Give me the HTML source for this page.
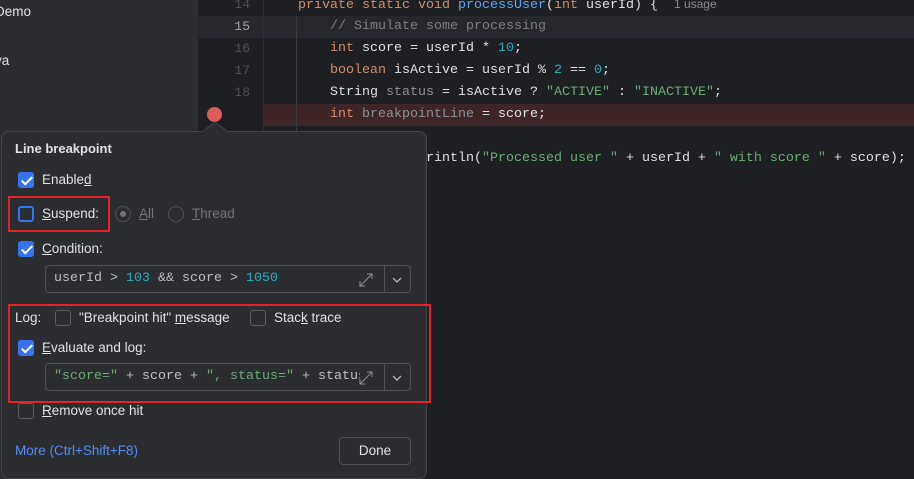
<!DOCTYPE html>
<html><head><style>
*{margin:0;padding:0;box-sizing:border-box}
body{width:914px;height:479px;overflow:hidden;background:#1e1f22;font-family:"Liberation Sans",sans-serif;font-size:13.5px;color:#dfe1e5;position:relative}
.a{position:absolute}
.mono{font-family:"Liberation Mono",monospace;font-size:13.33px;white-space:pre}
.ln{position:absolute;left:198px;width:52px;text-align:right;color:#4b5059;font-family:"Liberation Mono",monospace;font-size:13px}
.code{position:absolute;left:298px}
.k{color:#cf8e6d}.f{color:#56a8f5}.n{color:#2aacb8}.s{color:#6aab73}.c{color:#7a7e85}.g{color:#8c8f94}
.cb{position:absolute;width:16px;height:16px;border-radius:3px;border:1px solid #5a5d63}
.cb.on{background:#3574f0;border-color:#3574f0}
.cb.on::after{content:"";position:absolute;left:5px;top:1px;width:4px;height:9px;border:solid #fff;border-width:0 2px 2px 0;transform:rotate(45deg)}
.lbl{position:absolute;white-space:nowrap}
.field{position:absolute;left:45px;width:366px;height:28px;border:1px solid #4e5157;border-radius:4px;background:#2b2d30}
.field .sep{position:absolute;left:338px;top:0;bottom:0;width:1px;background:#4e5157}
.red{position:absolute;border:2px solid #e5212a}
u{text-decoration:underline}
</style></head><body>
<div class="a" style="left:0;top:0;width:198px;height:479px;background:#2b2d30"></div>
<div class="lbl" style="left:-5px;top:4px">Demo</div>
<div class="lbl" style="left:-5px;top:53px">va</div>
<div class="a" style="left:198px;top:16px;width:716px;height:22px;background:#26282e"></div>
<div class="a" style="left:263px;top:104px;width:651px;height:22px;background:#3e2628"></div>
<div class="a" style="left:263px;top:0;width:1px;height:131px;background:#2b2d30"></div>
<div class="a" style="left:296px;top:16px;width:1px;height:115px;background:#393b40"></div>
<div class="ln" style="top:-3px">14</div>
<div class="ln" style="top:19px;color:#a1a3ab">15</div>
<div class="ln" style="top:41px">16</div>
<div class="ln" style="top:63px">17</div>
<div class="ln" style="top:85px">18</div>
<div class="a" style="left:207px;top:107px;width:15px;height:15px;border-radius:50%;background:#db5c5c"></div>
<div class="code mono" style="top:-3px"><span class="k">private static void </span><span class="f">processUser</span>(<span class="k">int </span>userId) {  <span style="font-family:'Liberation Sans';font-size:12px;color:#868a91">1 usage</span></div>
<div class="code mono" style="top:19px">    <span class="c">// Simulate some processing</span></div>
<div class="code mono" style="top:41px">    <span class="k">int </span>score = userId * <span class="n">10</span>;</div>
<div class="code mono" style="top:63px">    <span class="k">boolean </span>isActive = userId % <span class="n">2</span> == <span class="n">0</span>;</div>
<div class="code mono" style="top:85px">    String <span class="g">status</span> = isActive ? <span class="s">"ACTIVE"</span> : <span class="s">"INACTIVE"</span>;</div>
<div class="code mono" style="top:107px">    <span class="k">int </span><span class="g">breakpointLine</span> = score;</div>
<div class="code mono" style="top:151px">    System.out.println(<span class="s">"Processed user "</span> + userId + <span class="s">" with score "</span> + score);</div>

<div class="a" style="left:1px;top:131px;width:426px;height:348px;background:#2b2d30;border:1px solid #43454a;border-radius:8px"></div>
<svg class="a" style="left:202px;top:121px" width="26" height="12"><path d="M0 11 L13 1 L26 11" fill="#2b2d30" stroke="#43454a"/><rect x="1" y="10.5" width="24" height="2" fill="#2b2d30"/></svg>
<div class="lbl" style="left:15px;top:141px;font-weight:bold;font-size:13px">Line breakpoint</div>
<div class="cb on" style="left:18px;top:172px"></div>
<div class="lbl" style="left:42px;top:172px">Enable<u>d</u></div>
<div class="red" style="left:8px;top:196px;width:102px;height:36px"></div>
<div class="cb" style="left:18px;top:206px;border-color:#3574f0;border-width:2px"></div>
<div class="lbl" style="left:42px;top:206px"><u>S</u>uspend:</div>
<div class="a" style="left:115px;top:206px;width:16px;height:16px;border-radius:50%;border:1px solid #4e5157"><div class="a" style="left:4px;top:4px;width:6px;height:6px;border-radius:50%;background:#6f737a"></div></div>
<div class="lbl" style="left:139px;top:206px;color:#6f737a"><u>A</u>ll</div>
<div class="a" style="left:168px;top:206px;width:16px;height:16px;border-radius:50%;border:1px solid #4e5157"></div>
<div class="lbl" style="left:192px;top:206px;color:#6f737a"><u>T</u>hread</div>
<div class="cb on" style="left:18px;top:241px"></div>
<div class="lbl" style="left:42px;top:241px"><u>C</u>ondition:</div>
<div class="field" style="top:265px"><div class="mono" style="position:absolute;left:8px;top:5px;color:#bcbec4">userId &gt; <span class="n">103</span> &amp;&amp; score &gt; <span class="n">1050</span></div><div class="sep"></div>
<svg class="a" style="left:313px;top:7px" width="14" height="14" stroke="#8c8f94" fill="none"><path d="M1 13 L13 1 M8 1 H13 V6 M1 8 V13 H6"/></svg>
<svg class="a" style="left:346px;top:10px" width="10" height="8" stroke="#b0b3b8" fill="none" stroke-width="1.3"><path d="M1 2 L5 6 L9 2"/></svg></div>
<div class="red" style="left:8px;top:304px;width:423px;height:99px"></div>
<div class="lbl" style="left:15px;top:310px">Log:</div>
<div class="cb" style="left:55px;top:310px"></div>
<div class="lbl" style="left:79px;top:310px">"Breakpoint hit" <u>m</u>essage</div>
<div class="cb" style="left:250px;top:310px"></div>
<div class="lbl" style="left:274px;top:310px">Stac<u>k</u> trace</div>
<div class="cb on" style="left:18px;top:340px"></div>
<div class="lbl" style="left:42px;top:340px"><u>E</u>valuate and log:</div>
<div class="field" style="top:363px;overflow:hidden"><div class="mono" style="position:absolute;left:8px;top:5px;width:306px;overflow:hidden;color:#bcbec4"><span class="s">"score="</span> + score + <span class="s">", status="</span> + status</div><div class="sep"></div>
<svg class="a" style="left:313px;top:7px" width="14" height="14" stroke="#8c8f94" fill="none"><path d="M1 13 L13 1 M8 1 H13 V6 M1 8 V13 H6"/></svg>
<svg class="a" style="left:346px;top:10px" width="10" height="8" stroke="#b0b3b8" fill="none" stroke-width="1.3"><path d="M1 2 L5 6 L9 2"/></svg></div>
<div class="cb" style="left:18px;top:403px"></div>
<div class="lbl" style="left:42px;top:403px"><u>R</u>emove once hit</div>
<div class="lbl" style="left:15px;top:443px;color:#548af7">More (Ctrl+Shift+F8)</div>
<div class="a" style="left:339px;top:437px;width:72px;height:28px;border:1px solid #4e5157;border-radius:4px;text-align:center;line-height:26px">Done</div>
</body></html>
